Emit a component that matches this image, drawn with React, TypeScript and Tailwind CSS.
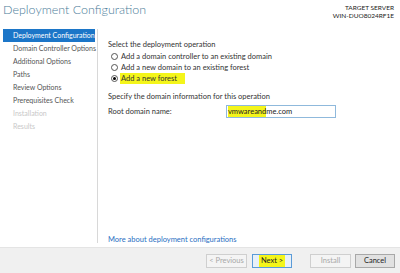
import React from 'react';

const navItems = [
  { label: 'Deployment Configuration', state: 'active' },
  { label: 'Domain Controller Options', state: 'normal' },
  { label: 'Additional Options', state: 'normal' },
  { label: 'Paths', state: 'normal' },
  { label: 'Review Options', state: 'normal' },
  { label: 'Prerequisites Check', state: 'normal' },
  { label: 'Installation', state: 'disabled' },
  { label: 'Results', state: 'disabled' },
];

const Radio: React.FC<{ checked?: boolean }> = ({ checked }) => (
  <span className="w-[7px] h-[7px] rounded-full border border-[#555] bg-white flex items-center justify-center shrink-0">
    {checked && <span className="w-[3px] h-[3px] rounded-full bg-black" />}
  </span>
);

export default function App() {
  return (
    <div
      className="w-[400px] h-[273px] bg-white flex flex-col overflow-hidden text-[#333]"
      style={{ fontFamily: 'Lato, "Open Sans", sans-serif' }}
    >
      {/* header */}
      <div className="h-[29px] flex justify-between shrink-0">
        <div className="pl-[3px] pt-[1px] text-[12.5px] leading-[18px] font-light text-[#4b7c99]">Deployment Configuration</div>
        <div className="pr-[6px] pt-[4px] text-right text-[6.5px] leading-[8px] text-[#222]">
          <div>TARGET SERVER</div>
          <div>WIN-DUO8024RF1E</div>
        </div>
      </div>

      {/* body */}
      <div className="flex-1 flex">
        <div className="w-[98px] shrink-0 pl-[3px] pb-[4px] flex">
          <div className="w-[95px] border-r border-[#d8d8d8] pr-[2px] overflow-hidden">
            {navItems.map((item) => (
              <div
                key={item.label}
                className={
                  'h-[13px] pl-[10px] text-[7px] leading-[13px] whitespace-nowrap ' +
                  (item.state === 'active'
                    ? 'bg-[#1c76c8] text-white'
                    : item.state === 'disabled'
                    ? 'text-[#c8c8c8]'
                    : 'text-[#555]')
                }
              >
                {item.label}
              </div>
            ))}
          </div>
        </div>

        <div className="flex-1 pl-[10px] pt-[10px] flex flex-col text-[7.5px] leading-[11px] text-[#333]">
          <div>Select the deployment operation</div>
          <div className="mt-[1px] pl-[3px] flex flex-col">
            <label className="h-[11px] flex items-center gap-[3px]">
              <Radio />
              <span>Add a domain controller to an existing domain</span>
            </label>
            <label className="h-[11px] flex items-center gap-[3px]">
              <Radio />
              <span>Add a new domain to an existing forest</span>
            </label>
            <label className="h-[11px] flex items-center gap-[3px]">
              <Radio checked />
              <span className="bg-[#f4f51a] pr-[8px] -ml-[1px] pl-[1px]">Add a new forest</span>
            </label>
          </div>
          <div className="mt-[7px]">Specify the domain information for this operation</div>
          <div className="mt-[3px] flex items-center">
            <span className="w-[118px]">Root domain name:</span>
            <div className="w-[110px] h-[13px] border border-[#8fb9dc] flex items-center pl-[1px] text-[7.5px] text-[#222]">
              <span className="bg-[#f4f51a]">vmwareand</span>
              <span>me.com</span>
            </div>
          </div>
          <div className="flex-1" />
          <div className="pb-[2px] text-[#2a6fc2]">More about deployment configurations</div>
        </div>
      </div>

      {/* footer */}
      <div className="h-[26px] shrink-0 bg-[#f0f0f0] border-t border-[#e4e4e4] flex items-center justify-end pr-[5px] text-[7.5px]">
        <button className="w-[41px] h-[14px] border border-[#cfcfcf] bg-[#f4f4f4] text-[#a8a8a8] leading-[12px]">
          &lt; Previous
        </button>
        <button className="ml-[5px] w-[40px] h-[14px] border border-[#5a9bd8] bg-[#e8f0f8] text-[#222] leading-[12px] flex items-center justify-center">
          <span className="bg-[#f4f51a] px-[2px]">Next &gt;</span>
        </button>
        <button className="ml-[18px] w-[41px] h-[14px] border border-[#cfcfcf] bg-[#f4f4f4] text-[#a8a8a8] leading-[12px]">
          Install
        </button>
        <button className="ml-[4px] w-[40px] h-[14px] border border-[#a8a8a8] bg-[#e1e1e1] text-[#222] leading-[12px]">
          Cancel
        </button>
      </div>
    </div>
  );
}
